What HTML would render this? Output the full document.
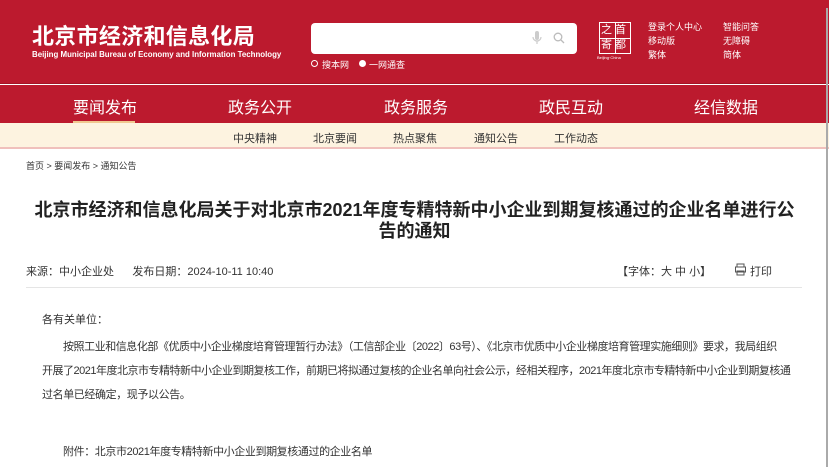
<!DOCTYPE html>
<html><head><meta charset="utf-8"><style>
*{margin:0;padding:0;box-sizing:border-box}
body{width:829px;height:467px;overflow:hidden;background:#fff;font-family:"Liberation Sans","Noto Sans CJK SC",sans-serif;color:#333;position:relative}
.a{position:absolute;white-space:nowrap}
.hdr{position:absolute;left:0;top:0;width:829px;height:84px;background:#bc1a2e;border-bottom:1px solid #a51426}
.nav{position:absolute;left:0;top:85px;width:829px;height:38px;background:#bc1a2e}
.nav span{position:absolute;top:9px;color:#fff;font-size:16px}
.sub{position:absolute;left:0;top:123px;width:829px;height:26px;background:#fdf3e0;border-bottom:2px solid #f0c0bc}
.sub span{position:absolute;top:7px;font-size:11px;color:#333}
.w{color:#fff}
</style></head><body>
<div class="hdr"></div>
<div class="a w" style="left:32px;top:19px;font-size:22px;font-weight:bold;letter-spacing:0.3px">北京市经济和信息化局</div>
<div class="a w" style="left:32px;top:50px;font-size:7.9px;font-weight:bold">Beijing Municipal Bureau of Economy and Information Technology</div>
<div class="a" style="left:311px;top:23px;width:266px;height:31px;background:#fff;border-radius:4px"></div>
<svg class="a" style="left:531px;top:30px" width="12" height="16" viewBox="0 0 12 16"><rect x="4" y="1" width="4" height="9" rx="2" fill="#ccc"/><path d="M2 7a4 4 0 0 0 8 0M6 11v3" stroke="#ccc" stroke-width="1.2" fill="none"/></svg>
<svg class="a" style="left:553px;top:32px" width="12" height="12" viewBox="0 0 12 12"><circle cx="5" cy="5" r="3.8" stroke="#bbb" stroke-width="1.3" fill="none"/><path d="M8 8l3 3" stroke="#bbb" stroke-width="1.3"/></svg>
<div class="a" style="left:311px;top:60px;width:7px;height:7px;border:1.5px solid #fff;border-radius:50%"></div>
<div class="a w" style="left:322px;top:58px;font-size:9px">搜本网</div>
<div class="a" style="left:359px;top:60px;width:7px;height:7px;background:#fff;border-radius:50%"></div>
<div class="a w" style="left:369px;top:58px;font-size:9px">一网通查</div>
<div class="a" style="left:599px;top:22px;width:32px;height:32px;border:1.5px solid #fff"></div>
<div class="a" style="left:599px;top:38px;width:32px;height:1px;background:#fff"></div>
<div class="a" style="left:615px;top:22px;width:1px;height:32px;background:#fff"></div>
<div class="a w" style="left:601px;top:23px;font-size:11px;line-height:15px">之 首<br>寄 都</div>
<div class="a w" style="left:597px;top:55px;font-size:4px">Beijing·China</div>
<div class="a w" style="left:648px;top:20px;font-size:9px;line-height:14px">登录个人中心<br>移动版<br>繁体</div>
<div class="a w" style="left:723px;top:20px;font-size:9px;line-height:14px">智能问答<br>无障碍<br>简体</div>
<div class="nav"></div>
<div class="nav" style="background:none">
<span style="left:73px">要闻发布</span><span style="left:228px">政务公开</span><span style="left:384px">政务服务</span><span style="left:539px">政民互动</span><span style="left:694px">经信数据</span></div>
<div class="a" style="left:73px;top:121px;width:62px;height:2px;background:#f0c890"></div>
<div class="sub"><span style="left:233px">中央精神</span><span style="left:313px">北京要闻</span><span style="left:393px">热点聚焦</span><span style="left:474px">通知公告</span><span style="left:554px">工作动态</span></div>
<div class="a" style="left:826px;top:8px;width:2px;height:459px;background:#aaa"></div>
<div class="a" style="left:26px;top:159px;font-size:9px">首页 &gt; 要闻发布 &gt; 通知公告</div>
<div class="a" style="left:0;width:829px;text-align:center;top:200px;font-size:18px;font-weight:bold;color:#222;line-height:21px">北京市经济和信息化局关于对北京市2021年度专精特新中小企业到期复核通过的企业名单进行公<br>告的通知</div>
<div class="a" style="left:26px;top:263px;font-size:11px">来源：中小企业处&nbsp;&nbsp;&nbsp;&nbsp;&nbsp;&nbsp;发布日期：2024-10-11 10:40</div>
<div class="a" style="left:617px;top:263px;font-size:11px">【字体：大 中 小】</div>
<svg class="a" style="left:734px;top:263px" width="13" height="13" viewBox="0 0 13 13"><path d="M3 4V1h7v3M1.5 4h10v5h-10zM3 8h7v4H3z" fill="none" stroke="#555" stroke-width="1"/></svg>
<div class="a" style="left:750px;top:263px;font-size:11px">打印</div>
<div class="a" style="left:26px;top:287px;width:776px;height:1px;background:#e5e5e5"></div>
<div class="a" style="left:42px;top:311px;font-size:11px">各有关单位：</div>
<div class="a" style="left:63px;top:335px;font-size:11px;line-height:24px;letter-spacing:-0.45px">按照工业和信息化部《优质中小企业梯度培育管理暂行办法》（工信部企业〔2022〕63号）、《北京市优质中小企业梯度培育管理实施细则》要求，我局组织</div>
<div class="a" style="left:42px;top:359px;font-size:11px;line-height:24px;letter-spacing:-0.5px">开展了2021年度北京市专精特新中小企业到期复核工作，前期已将拟通过复核的企业名单向社会公示，经相关程序，2021年度北京市专精特新中小企业到期复核通</div>
<div class="a" style="left:42px;top:383px;font-size:11px;line-height:24px;letter-spacing:-0.4px">过名单已经确定，现予以公告。</div>
<div class="a" style="left:63px;top:443px;font-size:11px;letter-spacing:-0.4px">附件：北京市2021年度专精特新中小企业到期复核通过的企业名单</div>
</body></html>
